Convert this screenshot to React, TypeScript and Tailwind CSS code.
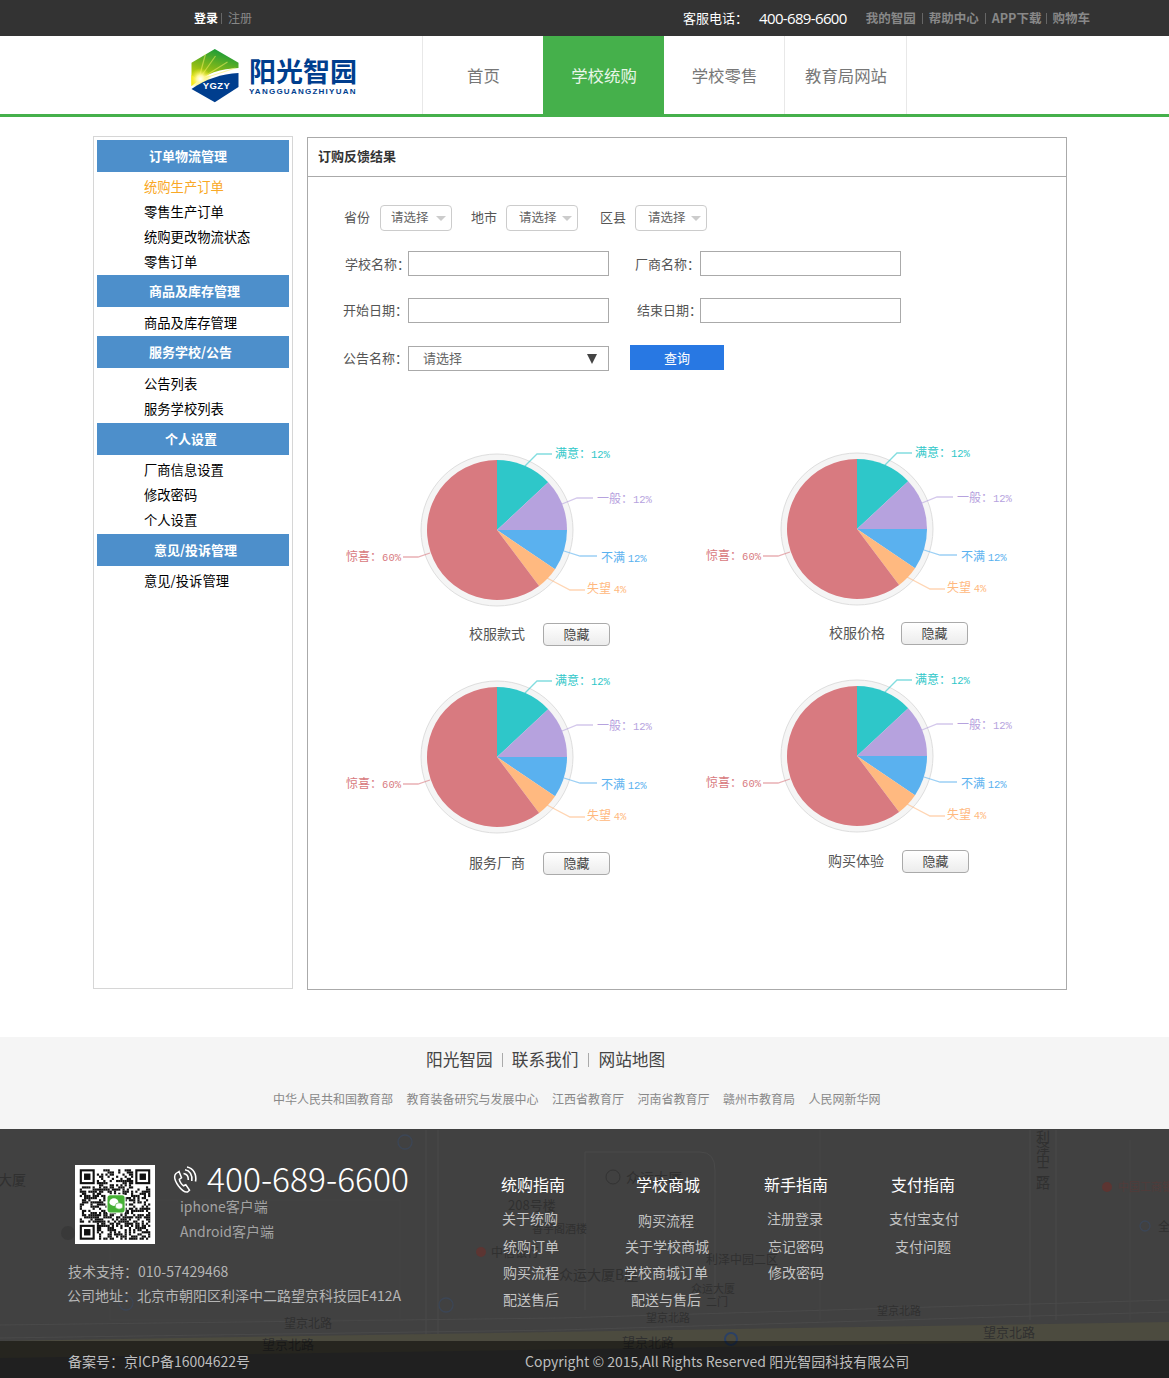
import React from "react";

const polar = (r: number, deg: number) => {
  const a = ((deg - 90) * Math.PI) / 180;
  return [r * Math.cos(a), r * Math.sin(a)];
};
const slice = (r: number, a: number, b: number) => {
  const [x1, y1] = polar(r, a);
  const [x2, y2] = polar(r, b);
  return `M0 0L${x1} ${y1}A${r} ${r} 0 ${b - a > 180 ? 1 : 0} 1 ${x2} ${y2}Z`;
};

const slices = [
  { a: 0, b: 47, c: "#2ec7c9" },
  { a: 47, b: 90, c: "#b6a2de" },
  { a: 90, b: 124, c: "#5ab1ef" },
  { a: 124, b: 143, c: "#ffb980" },
  { a: 143, b: 360, c: "#d87a80" },
];
const leaders = [
  { p: "28,-64 40,-76 55,-76", c: "#2ec7c9", x: 58, y: -72, t: "满意：", n: "12%", anchor: "start" },
  { p: "65,-26 80,-32 96,-32", c: "#b6a2de", x: 100, y: -27, t: "一般：", n: "12%", anchor: "start" },
  { p: "67,21 83,26 100,26", c: "#5ab1ef", x: 104, y: 32, t: "不满 ", n: "12%", anchor: "start" },
  { p: "50,48 73,60 88,60", c: "#ffb980", x: 90, y: 63, t: "失望 ", n: "4%", anchor: "start" },
  { p: "-67,23 -79,27 -94,27", c: "#d87a80", x: -96, y: 31, t: "惊喜：", n: "60%", anchor: "end" },
];

function Pie() {
  return (
    <svg width="360" height="190" viewBox="-157 -100 360 190" className="block">
      <circle r="76" fill="#f5f5f5" stroke="#dedede" strokeWidth="1" />
      {slices.map((s) => (
        <path key={s.c} d={slice(70, s.a, s.b)} fill={s.c} />
      ))}
      {leaders.map((l) => (
        <g key={l.t}>
          <polyline points={l.p} fill="none" stroke={l.c} strokeOpacity="0.6" strokeWidth="1.3" />
          <text x={l.x} y={l.y} fill={l.c} fontSize="12" textAnchor={l.anchor as "start" | "end"} xmlSpace="preserve">
            {l.t}
            <tspan fontSize="10.5" fontFamily="'Liberation Mono',monospace">{l.n}</tspan>
          </text>
        </g>
      ))}
    </svg>
  );
}

const btnBase = "w-[67px] h-[23px] pb-[2px] border border-[#aaa] rounded-sm bg-gradient-to-b from-white to-[#ececec] text-[13px] text-[#444] shrink-0";

function Chart({ name, className, capClass, btnClass }: { name: string; className: string; capClass: string; btnClass: string }) {
  return (
    <div className={className}>
      <Pie />
      <div className={capClass}>
        <span className="text-[14px] pb-[2px] text-[#555] w-[57px] whitespace-nowrap">{name}</span>
        <button className={btnBase + " " + btnClass}>隐藏</button>
      </div>
    </div>
  );
}

function Logo() {
  return (
    <div className="w-[232px] pl-[191px]">
      <svg width="48" height="54" viewBox="0 0 47 54" className="shrink-0 mt-[13px]">
        <defs>
          <linearGradient id="lg" x1="0.6" y1="0" x2="0.2" y2="1">
            <stop offset="0" stopColor="#159a3a" />
            <stop offset="0.55" stopColor="#8dbb15" />
            <stop offset="1" stopColor="#f2ea08" />
          </linearGradient>
          <radialGradient id="sun" cx="0.5" cy="0.5" r="0.5">
            <stop offset="0" stopColor="#ffffff" />
            <stop offset="0.35" stopColor="#fff9a0" />
            <stop offset="1" stopColor="#f5ea10" stopOpacity="0" />
          </radialGradient>
        </defs>
        <path d="M23.3 0L47 13.7V19C30 19.5 14 24 0 37V13.7Z" fill="url(#lg)" />
        <path d="M7 31L14 5M7 31L24 7M7 31L36 13M7 31L44 19" stroke="#f4ee60" strokeOpacity="0.55" strokeWidth="1.2" fill="none" />
        <path d="M0 26L7 31L0 37Z" fill="#f5ea10" />
        <circle cx="9" cy="30" r="11" fill="url(#sun)" />
        <path d="M0 40C14 30 30 25 47 24V38L23.3 53.3L0 40Z" fill="#003e8e" />
        <text x="25" y="40" textAnchor="middle" fontSize="9.5" fontWeight="700" fill="#fff" fontFamily="'Liberation Sans',sans-serif" letterSpacing="0.4">
          YGZY
        </text>
      </svg>
    </div>
  );
}

function QR() {
  const n = 33;
  const cells: React.ReactNode[] = [];
  let seed = 73;
  const rnd = () => {
    seed = (seed * 1103515245 + 12345) & 0x7fffffff;
    return (seed >> 12) % 100;
  };
  const inFinder = (x: number, y: number) => (x < 8 && y < 8) || (x >= n - 8 && y < 8) || (x < 8 && y >= n - 8);
  for (let y = 0; y < n; y++) {
    for (let x = 0; x < n; x++) {
      if (!inFinder(x, y) && rnd() < 52) {
        cells.push(<rect key={`${x}-${y}`} x={x + 2} y={y + 2} width="1.02" height="1.02" fill="#111" />);
      }
    }
  }
  const finder = (x: number, y: number) => (
    <g key={`${x}${y}`}>
      <rect x={x + 0.5} y={y + 0.5} width="6" height="6" fill="none" stroke="#111" />
      <rect x={x + 2} y={y + 2} width="3" height="3" fill="#111" />
    </g>
  );
  return (
    <svg width="80" height="79" viewBox="0 0 37 37" className="shrink-0 bg-white block">
      {cells}
      {finder(2, 2)}
      {finder(28, 2)}
      {finder(2, 28)}
      <rect x="14.5" y="13.7" width="9" height="9" rx="1.4" fill="#fff" />
      <rect x="15" y="14.2" width="8" height="8" rx="1.2" fill="#45b035" />
      <ellipse cx="18" cy="17.4" rx="2.1" ry="1.8" fill="#fff" />
      <ellipse cx="20.4" cy="19.2" rx="1.8" ry="1.5" fill="#fff" stroke="#45b035" strokeWidth="0.3" />
    </svg>
  );
}

function MapLayer() {
  const c = "#303030";
  return (
    <svg width="1169" height="249" viewBox="0 1129 1169 249" className="absolute left-0 top-0 block">
      <g fill="none" stroke="#4a4a4a" strokeWidth="1">
        <path d="M0 1325L560 1318L1169 1300" />
        <path d="M0 1338L560 1330L1169 1312" />
        <path d="M426 1130V1340M438 1130V1340" />
        <path d="M1030 1130V1320M1056 1130V1320" />
        <path d="M585 1152H700Q715 1152 715 1170V1300M585 1152V1310" />
        <path d="M110 1200H400V1320H110Z" stroke="#454545" />
        <path d="M820 1130V1320M1130 1140V1320" stroke="#474747" />
      </g>
      <path d="M0 1341L1169 1322V1340L0 1358Z" fill="#4c4b3f" />
      <g fill={c} fontSize="14">
        <text x="-2" y="1185" fontSize="14">大厦</text>
        <text x="1036" y="1142" fontSize="14">利</text>
        <text x="1036" y="1153" fontSize="14">泽</text>
        <text x="1036" y="1165" fontSize="14">中</text>
        <text x="1036" y="1177" fontSize="14">二</text>
        <text x="1036" y="1188" fontSize="14">路</text>
        <text x="626" y="1183" fontSize="14">众运大厦</text>
        <text x="508" y="1210" fontSize="13">208号楼</text>
        <text x="532" y="1233" fontSize="11">香芋阁酒楼</text>
        <text x="491" y="1257" fontSize="12">中信银行</text>
        <text x="559" y="1280" fontSize="14">众运大厦B座</text>
        <text x="706" y="1264" fontSize="12">利泽中园二区</text>
        <text x="691" y="1293" fontSize="11">众运大厦</text>
        <text x="706" y="1306" fontSize="11">二门</text>
        <text x="646" y="1322" fontSize="11">望京北路</text>
        <text x="622" y="1347" fontSize="13">望京北路</text>
        <text x="284" y="1328" fontSize="12">望京北路</text>
        <text x="262" y="1349" fontSize="13">望京北路</text>
        <text x="877" y="1315" fontSize="11">望京北路</text>
        <text x="983" y="1337" fontSize="13">望京北路</text>
        <text x="1158" y="1231" fontSize="12">全</text>
      </g>
      <text x="1118" y="1191" fontSize="11" fill="#523c3a">中国工商银</text>
      <circle cx="1107" cy="1187" r="5" fill="#5c3532" />
      <circle cx="481" cy="1252" r="5" fill="#5c3532" />
      <g fill="none" stroke="#3c4656" strokeWidth="1.3">
        <circle cx="405" cy="1142" r="7" />
        <circle cx="126" cy="1303" r="7" />
        <circle cx="446" cy="1305" r="7" />
        <circle cx="1145" cy="1226" r="5" />
      </g>
      <circle cx="731" cy="1339" r="6" fill="none" stroke="#2b4065" strokeWidth="2" />
      <circle cx="68" cy="1233" r="7" fill="#393939" />
      <circle cx="613" cy="1177" r="7" fill="none" stroke="#333" />
    </svg>
  );
}

const itemCls = "h-[25px] pb-[2px] flex items-center pl-[47px] text-[13.3px] text-black whitespace-nowrap";
const headCls = "h-[32px] pb-px flex items-center bg-[#4d8fcb] text-white text-[13px] font-bold";
const labelCls = "text-[13px] text-[#555] whitespace-nowrap";
const inputCls = "w-[201px] h-[25px] border border-[#aaa] bg-white";
const navCls = "flex items-center justify-center pl-px text-[16.4px]";

function Sel({ pad }: { pad: string }) {
  return (
    <div className={"w-[72px] h-[26px] pb-[2px] border border-[#ccc] rounded-sm flex items-center justify-between pr-[5px] text-[12.5px] text-[#666] " + pad}>
      <span>请选择</span>
      <span className="w-0 h-0 mt-[2px] border-l-[5px] border-r-[5px] border-t-[5px] border-l-transparent border-r-transparent border-t-[#ccc]" />
    </div>
  );
}

export default function App() {
  return (
    <div className="w-[1169px] h-[1378px] overflow-hidden bg-white font-['Noto_Sans_CJK_SC',sans-serif]">
      {/* top bar */}
      <div className="h-9 bg-[#333] flex items-center text-[12px] text-[#888] whitespace-nowrap">
        <span className="ml-[194px] text-white font-bold">登录</span>
        <span className="ml-[3px] mr-[6px] h-[11px] w-px bg-[#666]" />
        <span>注册</span>
        <span className="ml-[431px] text-white text-[13px]">客服电话：</span>
        <span className="ml-[11px] text-white text-[15px] tracking-[-0.65px] font-['Open_Sans',sans-serif]">400-689-6600</span>
        <span className="ml-[19px] font-bold text-[12.5px]">我的智园</span>
        <span className="mx-[6px] h-[11px] w-px bg-[#666]" />
        <span className="font-bold text-[12.5px]">帮助中心</span>
        <span className="mx-[6px] h-[11px] w-px bg-[#666]" />
        <span className="font-bold text-[12.5px]">APP下载</span>
        <span className="mx-[5px] h-[11px] w-px bg-[#666]" />
        <span className="font-bold text-[12.5px]">购物车</span>
      </div>

      {/* nav */}
      <div className="h-[81px] border-b-[3px] border-[#45b04b] flex">
        <div className="relative w-[422px] shrink-0">
          <Logo />
          <div className="absolute left-[249px] top-[18px] text-[#003e8e] leading-none">
            <div className="text-[27px] font-bold leading-[33px] whitespace-nowrap">阳光智园</div>
            <div className="text-[8px] font-bold tracking-[1.25px] leading-[9px] font-['Liberation_Sans',sans-serif] whitespace-nowrap">YANGGUANGZHIYUAN</div>
          </div>
        </div>
        <div className={`${navCls} w-[121px] border-l border-[#e8e8e8] text-[#777]`}>首页</div>
        <div className={`${navCls} w-[121px] bg-[#45b04b] text-[#e8f6e8]`}>学校统购</div>
        <div className={`${navCls} w-[121px] border-r border-[#e8e8e8] text-[#777]`}>学校零售</div>
        <div className={`${navCls} w-[122px] border-r border-[#e8e8e8] text-[#777]`}>教育局网站</div>
      </div>

      {/* main */}
      <div className="flex items-start ml-[93px] mt-[19px] h-[901px]">
        <aside className="w-[200px] h-[853px] border border-[#d6d6d6] p-[3px]">
          <div className={`${headCls} pl-[52px]`}>订单物流管理</div>
          <div className="pt-[3px]">
            <div className={`${itemCls} !text-[#f9a825]`}>统购生产订单</div>
            <div className={itemCls}>零售生产订单</div>
            <div className={itemCls}>统购更改物流状态</div>
            <div className={itemCls}>零售订单</div>
          </div>
          <div className={`${headCls} pl-[52px]`}>商品及库存管理</div>
          <div className="pt-[4px]">
            <div className={itemCls}>商品及库存管理</div>
          </div>
          <div className={`${headCls} pl-[52px]`}>服务学校/公告</div>
          <div className="pt-[4px] pb-px">
            <div className={itemCls}>公告列表</div>
            <div className={itemCls}>服务学校列表</div>
          </div>
          <div className={`${headCls} pl-[68px]`}>个人设置</div>
          <div className="pt-[3px] pb-px">
            <div className={itemCls}>厂商信息设置</div>
            <div className={itemCls}>修改密码</div>
            <div className={itemCls}>个人设置</div>
          </div>
          <div className={`${headCls} pl-[57px]`}>意见/投诉管理</div>
          <div className="pt-[3px]">
            <div className={itemCls}>意见/投诉管理</div>
          </div>
        </aside>

        <section className="ml-[14px] mt-px w-[760px] h-[853px] border border-[#aaa]">
          <div className="h-[39px] pb-[3px] border-b border-[#aaa] flex items-center pl-[10px] text-[13px] font-bold text-[#333]">订购反馈结果</div>
          <div className="pt-[28px] pl-[35px]">
            <div className="flex items-center h-[26px]">
              <span className={`${labelCls} w-[37px] pl-px pb-[2px]`}>省份</span>
              <Sel pad="pl-[10px]" />
              <span className={`${labelCls} ml-[19px] w-[35px] pb-[2px]`}>地市</span>
              <Sel pad="pl-[12px]" />
              <span className={`${labelCls} ml-[22px] w-[35px] pb-[2px]`}>区县</span>
              <Sel pad="pl-[12px]" />
            </div>
            <div className="flex items-center mt-[20px]">
              <span className={`${labelCls} w-[65px] pl-[2px]`}>学校名称：</span>
              <input className={inputCls} />
              <span className={`${labelCls} w-[91px] pl-[26px]`}>厂商名称：</span>
              <input className={inputCls} />
            </div>
            <div className="flex items-center mt-[22px]">
              <span className={`${labelCls} w-[65px] pb-[2px]`}>开始日期：</span>
              <input className={inputCls} />
              <span className={`${labelCls} w-[91px] pl-[28px] pb-[2px]`}>结束日期：</span>
              <input className={inputCls} />
            </div>
            <div className="flex items-start mt-[23px]">
              <span className={`${labelCls} w-[65px] leading-[23px]`}>公告名称：</span>
              <div className="w-[201px] h-[25px] border border-[#aaa] flex items-center justify-between pl-[14px] pr-[11px] text-[13px] text-[#666]">
                <span className="pb-[2px]">请选择</span>
                <span className="w-0 h-0 border-l-[5px] border-r-[5px] border-t-[10px] border-l-transparent border-r-transparent border-t-[#444]" />
              </div>
              <button className="ml-[21px] -mt-px w-[94px] h-[25px] bg-[#2878e3] text-white text-[13px]">查询</button>
            </div>
          </div>
          <div className="ml-[32px] mt-[59px] grid grid-cols-[360px_360px]">
            <Chart name="校服款式" className="h-[227px]" capClass="mt-[3px] flex items-center pl-[129px]" btnClass="ml-[17px]" />
            <Chart name="校服价格" className="h-[227px] -mt-px" capClass="mt-[3px] flex items-center pl-[129px]" btnClass="ml-[15px]" />
            <Chart name="服务厂商" className="h-[227px]" capClass="mt-[5px] flex items-center pl-[129px]" btnClass="ml-[17px]" />
            <Chart name="购买体验" className="h-[227px] -mt-px" capClass="mt-[4px] flex items-center pl-[128px]" btnClass="ml-[17px]" />
          </div>
        </section>
      </div>

      {/* link band */}
      <div className="h-[92px] bg-[#f5f5f5]">
        <div className="flex items-center pl-[426px] pt-[11px] h-[35px] text-[16.7px] text-[#444]">
          <span>阳光智园</span>
          <span className="mx-[9px] h-[14px] w-px bg-[#aaa]" />
          <span>联系我们</span>
          <span className="mx-[9.5px] h-[14px] w-px bg-[#aaa]" />
          <span>网站地图</span>
        </div>
        <div className="flex items-center gap-[13.5px] pl-[273px] mt-[18px] text-[12px] text-[#888]">
          <span>中华人民共和国教育部</span>
          <span>教育装备研究与发展中心</span>
          <span>江西省教育厅</span>
          <span>河南省教育厅</span>
          <span>赣州市教育局</span>
          <span>人民网新华网</span>
        </div>
      </div>

      {/* dark footer */}
      <div className="relative h-[249px] bg-[#414141] overflow-hidden">
        <MapLayer />
        <div className="relative h-[212px] flex">
          <div className="w-[465px] shrink-0">
            <div className="flex pl-[75px] pt-[36px]">
              <QR />
              <div className="ml-[17px]">
                <div className="flex items-center h-[32px] -mt-[3px]">
                  <svg width="28" height="28" viewBox="0 0 28 28" fill="none" stroke="#fff" className="shrink-0 mt-[3px]">
                    <path d="M7 5.5L4 7.5C1.5 10 3 15 6.5 20C9.5 24 13 26.5 15.5 26L17.5 24.2L13.8 18.8L11.5 19.8C10 19 7.5 15.5 7.3 13.3L9.5 11.8Z" strokeWidth="1.5" />
                    <path d="M11.5 7.5C14.5 8 16.5 10.5 16.3 14" strokeWidth="1.6" />
                    <path d="M13 3.8C17.8 4.6 20.6 9 19.8 15" strokeWidth="1.6" />
                    <path d="M15 1C21 2 25 8 23.5 15.5" strokeWidth="1.6" />
                  </svg>
                  <span className="ml-[7px] text-[33.6px] leading-[32px] text-white whitespace-nowrap font-light">400-689-6600</span>
                </div>
                <div className="pl-[8px] text-[14px] leading-[25px] text-[#a3a3a3]">
                  <div>iphone客户端</div>
                  <div>Android客户端</div>
                </div>
              </div>
            </div>
            <div className="mt-[15px] text-[14px] leading-[24px] text-[#b5b5b5] whitespace-nowrap">
              <div className="pl-[68px]">技术支持：010-57429468</div>
              <div className="pl-[67px]">公司地址：北京市朝阳区利泽中二路望京科技园E412A</div>
            </div>
          </div>

          <div className="flex pt-[43px] text-[14px] text-[#c4c4c4] whitespace-nowrap">
            <div className="w-[135px]">
              <div className="h-[24px] leading-[24px] pl-[36px] text-[16px] text-white mb-[8px]">统购指南</div>
              <div className="h-[28px] leading-[28px] pl-[37px]">关于统购</div>
              <div className="h-[28px] leading-[28px] pl-[38px]">统购订单</div>
              <div className="h-[24px] leading-[24px] pl-[38px]">购买流程</div>
              <div className="h-[30px] leading-[30px] pl-[38px]">配送售后</div>
            </div>
            <div className="w-[135px]">
              <div className="h-[24px] leading-[24px] pl-[36px] text-[16px] text-white mb-[8px]">学校商城</div>
              <div className="h-[32px] leading-[32px] pl-[38px]">购买流程</div>
              <div className="h-[20px] leading-[20px] pl-[25px]">关于学校商城</div>
              <div className="h-[32px] leading-[32px] pl-[24px]">学校商城订单</div>
              <div className="h-[22px] leading-[22px] pl-[31px]">配送与售后</div>
            </div>
            <div className="w-[122px]">
              <div className="h-[24px] leading-[24px] pl-[29px] text-[16px] text-white mb-[8px]">新手指南</div>
              <div className="h-[28px] leading-[28px] pl-[32px]">注册登录</div>
              <div className="h-[28px] leading-[28px] pl-[33px]">忘记密码</div>
              <div className="h-[24px] leading-[24px] pl-[33px]">修改密码</div>
            </div>
            <div className="w-[132px]">
              <div className="h-[24px] leading-[24px] pl-[34px] text-[16px] text-white mb-[8px]">支付指南</div>
              <div className="h-[28px] leading-[28px] pl-[32px]">支付宝支付</div>
              <div className="h-[28px] leading-[28px] pl-[38px]">支付问题</div>
            </div>
          </div>
        </div>
        <div className="relative h-[37px] pt-[4px] bg-black/50 flex items-center text-[14px] text-[#bdbdbd] whitespace-nowrap">
          <span className="pl-[68px] w-[525px]">备案号：京ICP备16004622号</span>
          <span>Copyright © 2015,All Rights Reserved 阳光智园科技有限公司</span>
        </div>
      </div>
    </div>
  );
}
